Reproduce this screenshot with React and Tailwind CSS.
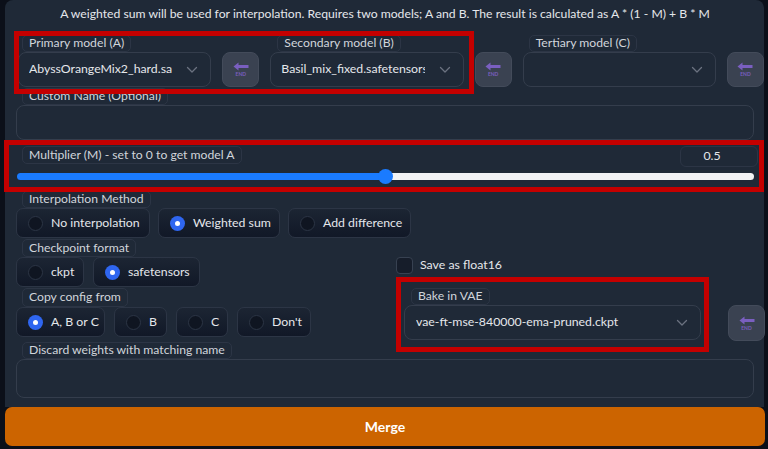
import React from "react";

function Label({ children, className = "" }) {
  return (
    <div
      className={`inline-flex h-[17px] items-center self-start whitespace-nowrap rounded-[5px] border border-[#2c3545] px-[6px] text-[12.2px] leading-none text-[#d1d5db] ${className}`}
    >
      {children}
    </div>
  );
}

function Chevron() {
  return (
    <svg width="12" height="8" viewBox="0 0 12 8" fill="none">
      <path d="M1.5 1.5 L6 6 L10.5 1.5" stroke="#6b7280" strokeWidth="1.3" strokeLinecap="round" strokeLinejoin="round" />
    </svg>
  );
}

function Dropdown({ value = "", className = "" }) {
  return (
    <div
      className={`flex h-[35px] items-center rounded-[8px] border border-[#343d4c] bg-[#1f2937] pl-[10px] pr-[12px] ${className}`}
    >
      <span className="flex-1 overflow-hidden whitespace-nowrap text-[12.3px] text-[#e5e7eb]">{value}</span>
      <span className="ml-[14px] flex shrink-0 items-center">
        <Chevron />
      </span>
    </div>
  );
}

function EndButton({ className = "" }) {
  return (
    <div
      className={`flex h-[35px] w-[37px] shrink-0 flex-col items-center justify-center rounded-[8px] border border-[#434b5a] bg-[#3a4251] ${className}`}
    >
      <svg width="16" height="9" viewBox="0 0 16 9">
        <path d="M0.5 4.5 L5.5 0.5 L5.5 3 L15.5 3 L15.5 6 L5.5 6 L5.5 8.5 Z" fill="#7a5fc0" />
      </svg>
      <span className="mt-[1px] text-[5px] font-bold leading-none text-[#7a5fc0]">END</span>
    </div>
  );
}

function Radio({ label, checked, className = "" }) {
  return (
    <div
      className={`flex h-[30px] items-center gap-[8px] whitespace-nowrap rounded-[7px] border border-[#2c3545] bg-gradient-to-t from-[#111827] to-[#1c2533] pl-[11px] pr-[10px] ${className}`}
    >
      {checked ? (
        <span className="flex h-[15px] w-[15px] shrink-0 items-center justify-center rounded-full bg-[#2f66f0]">
          <span className="h-[5px] w-[5px] rounded-full bg-white" />
        </span>
      ) : (
        <span className="h-[15px] w-[15px] shrink-0 rounded-full border border-[#2c3545] bg-[#0f1521]" />
      )}
      <span className="text-[12.3px] text-[#e5e7eb]">{label}</span>
    </div>
  );
}

function TextBox({ h = "h-[35px]" }) {
  return <div className={`${h} w-full rounded-[8px] border border-[#343d4c] bg-[#1f2937]`} />;
}

export default function App() {
  return (
    <div className="relative h-[449px] w-[768px] overflow-hidden bg-[#0b0f19] font-['Lato','Noto_Sans',sans-serif]">
      <div className="ml-[5px] flex h-[407px] w-[759px] flex-col rounded-t-[8px] bg-[#1f2937] pl-[11px] pr-[10px] pt-[5px]">
        <div className="h-[18px] whitespace-nowrap text-center text-[12.2px] leading-[18px] text-[#e5e7eb]">
          A weighted sum will be used for interpolation. Requires two models; A and B. The result is calculated as A * (1 - M) + B * M
        </div>

        {/* Row 1: models */}
        <div className="ml-[2px] mr-[-10px] mt-[12px] flex items-end gap-[11px]">
          <div className="flex min-w-0 flex-1 flex-col">
            <Label className="ml-[4px]">Primary model (A)</Label>
            <Dropdown value="AbyssOrangeMix2_hard.safetensors" className="pr-[10px]" />
          </div>
          <EndButton />
          <div className="flex min-w-0 flex-1 flex-col">
            <Label className="ml-[7px]">Secondary model (B)</Label>
            <Dropdown value="Basil_mix_fixed.safetensors" />
          </div>
          <EndButton />
          <div className="flex min-w-0 flex-1 flex-col">
            <Label className="ml-[6px]">Tertiary model (C)</Label>
            <Dropdown value="" />
          </div>
          <EndButton />
        </div>

        {/* Custom name */}
        <div className="mt-[1px] flex flex-col">
          <Label className="ml-[6px]">Custom Name (Optional)</Label>
          <TextBox />
        </div>

        {/* Multiplier */}
        <div className="mt-[6px] flex flex-col">
          <div className="flex items-start justify-between">
            <Label className="ml-[6px] h-[18px]">Multiplier (M) - set to 0 to get model A</Label>
            <div className="mr-[-4px] flex h-[21px] w-[78px] items-center justify-center rounded-[6px] border border-[#2c3545] pr-[14px] text-[12.3px] text-[#e5e7eb]">
              0.5
            </div>
          </div>
          <div className="relative mt-[2px] h-[15px]">
            <div className="absolute left-[1px] right-0 top-[4px] flex h-[7px] overflow-hidden rounded-full">
              <div className="h-full w-[368px] bg-[#1a7bff]" />
              <div className="h-full flex-1 bg-[#f1f2f4]" />
            </div>
            <div className="absolute left-[362px] top-0 h-[15px] w-[15px] rounded-full bg-[#1a7bff]" />
          </div>
        </div>

        {/* Interpolation method */}
        <div className="mt-[7px] flex flex-col">
          <Label className="ml-[6px]">Interpolation Method</Label>
          <div className="flex gap-[8px]">
            <Radio label="No interpolation" className="w-[134px]" />
            <Radio label="Weighted sum" checked className="w-[122px]" />
            <Radio label="Add difference" className="w-[123px]" />
          </div>
        </div>

        {/* Middle two-column */}
        <div className="flex">
          <div className="flex w-[380px] flex-col">
            <Label className="ml-[6px] mt-[1px] h-[18px]">Checkpoint format</Label>
            <div className="flex gap-[9px]">
              <Radio label="ckpt" className="w-[68px]" />
              <Radio label="safetensors" checked className="w-[107px]" />
            </div>
            <Label className="ml-[6px] mt-[1px] h-[19px]">Copy config from</Label>
            <div className="flex gap-[9px]">
              <Radio label="A, B or C" checked className="w-[89px]" />
              <Radio label="B" className="w-[53px] pl-[11px]" />
              <Radio label="C" className="w-[52px]" />
              <Radio label="Don't" className="w-[74px]" />
            </div>
          </div>
          <div className="mr-[-11px] flex flex-1 flex-col pt-[18px]">
            <div className="flex h-[18px] items-center gap-[7px]">
              <span className="h-[17px] w-[17px] shrink-0 rounded-[4px] border border-[#374151] bg-[#161d2a]" />
              <span className="text-[12.3px] text-[#e5e7eb]">Save as float16</span>
            </div>
            <div className="mt-[14px] flex flex-col">
              <Label className="ml-[15px]">Bake in VAE</Label>
              <div className="flex items-start">
                <Dropdown value="vae-ft-mse-840000-ema-pruned.ckpt" className="ml-[8px] w-[297px] pl-[11px] pr-[11px]" />
                <EndButton className="ml-[27px] h-[36px]" />
              </div>
            </div>
          </div>
        </div>

        {/* Discard weights */}
        <div className="mt-[1px] flex flex-col">
          <Label className="ml-[6px]">Discard weights with matching name</Label>
          <TextBox h="h-[39px]" />
        </div>
      </div>

      <div className="ml-[5px] flex h-[39px] w-[760px] items-center justify-center rounded-[7px] bg-[#cc6400] text-[14px] font-bold text-white">
        Merge
      </div>

      {/* Annotation boxes */}
      <div className="pointer-events-none absolute left-[14px] top-[31px] h-[63px] w-[460px] border-[5px] border-[#c40000]" />
      <div className="pointer-events-none absolute left-[4px] top-[140px] h-[52px] w-[760px] border-[5px] border-[#c40000]" />
      <div className="pointer-events-none absolute left-[396px] top-[277px] h-[75px] w-[313px] border-[5px] border-[#c40000]" />
    </div>
  );
}
